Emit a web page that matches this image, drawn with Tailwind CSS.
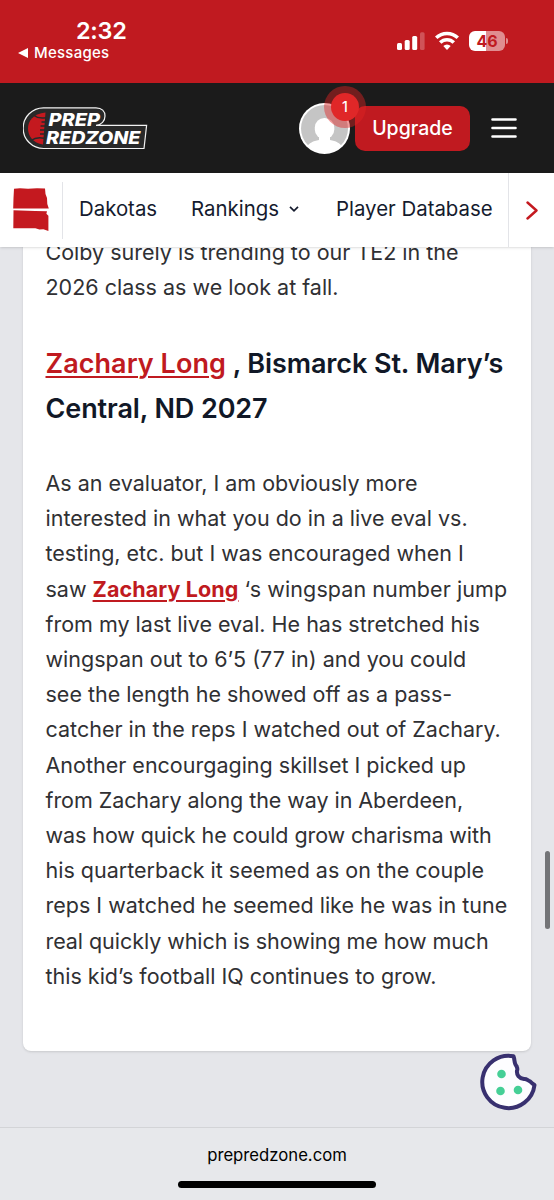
<!DOCTYPE html>
<html lang="en">
  <head>
    <meta charset="UTF-8" />
    <meta name="viewport" content="width=device-width, initial-scale=1.0" />
    <title>Prep Redzone</title>
    <script src="https://cdn.jsdelivr.net/npm/@tailwindcss/browser@4"></script>
  </head>
  <body class="w-[554px] h-[1200px] overflow-hidden flex flex-col bg-[#e5e6ea] font-['Inter','Liberation_Sans',sans-serif]">

    <!-- status bar -->
    <div class="h-[83px] shrink-0 bg-[#c01a20] text-white flex justify-between">
      <div class="pl-[18px] pt-[17px]">
        <p class="pl-[58px] text-[23.5px] leading-[28px] font-semibold tracking-[-0.3px]">2:32</p>
        <p class="flex items-center gap-[6px] pt-px text-[15px] leading-[14px] font-medium tracking-[0.25px]">
          <svg class="w-[10px] h-[10px]" viewBox="0 0 10 10"><path d="M0 5 10 0v10z" fill="currentColor" /></svg>
          Messages
        </p>
      </div>
      <div class="flex items-start pt-[31px] pr-[49px]">
        <svg class="w-[28px] h-5" viewBox="0 0 28 20" fill="#fff">
          <rect x="0" y="12" width="5" height="7" rx="1.5" />
          <rect x="7.7" y="9" width="5" height="10" rx="1.5" />
          <rect x="15.2" y="5" width="5" height="14" rx="1.5" />
          <rect x="23" y="1.3" width="4.6" height="17.7" rx="1.5" opacity=".25" />
        </svg>
        <svg class="w-6 h-5 ml-[10px] mr-[10px]" viewBox="0 0 24 20" fill="none" stroke="#fff" stroke-width="3.5">
          <path d="M1.2 6.8a15.4 15.4 0 0 1 21.6 0" />
          <path d="M5.2 11.6a9.6 9.6 0 0 1 13.6 0" />
          <path d="M8.3 15.1a5.2 5.2 0 0 1 7.4 0L12 18.9z" fill="#fff" stroke="none" />
        </svg>
        <div class="relative w-9 h-5 rounded-[6px] bg-linear-to-r from-white from-47% to-[#e08d90] to-47% text-[#c01a20] text-[16px] leading-5 font-bold text-center">46
          <div class="absolute -right-[3px] top-[7px] w-[2px] h-[6px] rounded-r-full bg-[#e08d90]"></div>
        </div>
      </div>
    </div>

    <!-- header -->
    <header class="h-[90px] shrink-0 bg-[#1b1b1b] flex items-center justify-between pl-[22.5px] pr-[37px]">
      <svg class="w-[125px] h-[43px]" viewBox="0 0 125 43">
        <path d="M20.5.8H73c6 0 9 3.6 9 8.2C82 14 78.5 17.800 73 18.3h50.6L121 41.5H20.5A20.3 20.3 0 0 1 20.5.8z" fill="#292929" stroke="#f2f2f2" stroke-width="1.2" />
        <path d="M22.5 5.5C10 7 5 14 5 21.500S10 36 20 37.500z" fill="#c4191f" />
        <path d="M11 8.500c3 2.500 7 3 12 2.200M8 33.500c4-3 8-3.500 13-2.300" fill="none" stroke="#292929" stroke-width="1.5" />
        <path d="M18.500 15h5M17.500 19h5M17 23h5M17 27h5" stroke="#292929" stroke-width="1.3" />
        <g fill="#fff" font-family="Inter, 'Liberation Sans', sans-serif" font-weight="800" font-style="italic" font-size="17.8">
          <text x="25.500" y="19" textLength="51.500" lengthAdjust="spacingAndGlyphs">PREP</text>
          <text x="23" y="37" textLength="94.500" lengthAdjust="spacingAndGlyphs">REDZONE</text>
        </g>
      </svg>
      <div class="flex items-center">
        <div class="relative z-10 w-[51px] h-[51px]">
          <svg class="w-[51px] h-[51px]" viewBox="0 0 51 51">
            <defs><clipPath id="face"><circle cx="25.5" cy="25.5" r="24" /></clipPath></defs>
            <circle cx="25.5" cy="25.5" r="25.5" fill="#fff" />
            <circle cx="25.5" cy="25.5" r="23.5" fill="#c5c5c5" />
            <g clip-path="url(#face)" fill="#fff">
              <rect x="15.8" y="15" width="19.5" height="21" rx="9.5" />
              <path d="M20 32h11v5c6 1 10 3 12 7v8H8v-8c2-4 6-6 12-7z" />
            </g>
          </svg>
          <div class="absolute left-[25px] -top-[17px] w-[42px] h-[42px] rounded-full bg-[#e02424]/45 flex items-center justify-center">
            <span class="w-7 h-7 rounded-full bg-[#e02728] text-white text-sm leading-7 text-center font-medium">1</span>
          </div>
        </div>
        <button class="ml-[5px] w-[115px] h-[45px] pt-[2px] rounded-[10px] bg-[#c01a20] text-white text-[19.5px] font-medium">Upgrade</button>
        <svg class="ml-[21px] w-[26px] h-5" viewBox="0 0 26 20" stroke="#fff" stroke-width="2.6" stroke-linecap="round"><path d="M1.500 1.500h23M1.500 10h23M1.500 18.500h23" /></svg>
      </div>
    </header>

    <!-- region nav -->
    <nav class="relative z-10 h-[74px] shrink-0 bg-white shadow-sm flex items-center text-[20.4px] text-[#151b2e]">
      <div class="w-[63px] h-[57px] pl-[13px] border-r border-[#e3e4e8] flex items-center">
        <svg class="w-9 h-[43px] mb-[2px]" viewBox="0 0 36 43" fill="#c4191f">
          <path d="M1 .8 7 .3 15 .8 24 .3 32 .5 32.500 6 34 10 34.300 16 35.800 20.500H.2L.5 10z" />
          <path d="M.5 22.300 22 23l12 .3-.6 2.500 2 2V43l-5-1.800-4 .3-4-1.300H.3z" />
        </svg>
      </div>
      <a class="w-[113px] pl-4 pb-[2px] whitespace-nowrap">Dakotas</a>
      <a class="w-[144px] pl-[15px] pb-[2px] whitespace-nowrap flex items-center gap-[10px]">Rankings
        <svg class="w-[10px] h-[6px]" viewBox="0 0 10 6" fill="none" stroke="currentColor" stroke-width="1.7"><path d="m1 .8 4 4 4-4" /></svg>
      </a>
      <a class="w-[188px] pl-4 pb-[2px] whitespace-nowrap">Player Database</a>
      <div class="flex-1 h-full border-l border-[#e3e4e8] flex items-center justify-center">
        <svg class="w-3 h-[19px]" viewBox="0 0 12 19" fill="none" stroke="#c4191f" stroke-width="2.4" stroke-linecap="round" stroke-linejoin="round"><path d="m1.500 1.500 9 8-9 8" /></svg>
      </div>
    </nav>

    <!-- article -->
    <main class="h-[880px] shrink-0 overflow-hidden px-[23px]">
      <article class="-mt-[13px] h-[817px] pt-[0.6px] rounded-lg bg-white shadow px-[22.5px] text-[21.5px] leading-[35.2px] text-[#303033] whitespace-nowrap">
        <p>Colby surely is trending to our TE2 in the<br />2026 class as we look at fall.</p>
        <h3 class="mt-[36px] text-[27px] leading-[45px] font-semibold tracking-[-0.1px] text-[#111827]"><a class="tracking-[0.05px] text-[#c01a20] underline decoration-2 underline-offset-[3px]">Zachary Long</a> , Bismarck St. Mary’s<br />Central, ND 2027</h3>
        <p class="mt-[35px]">As an evaluator, I am obviously more<br />
          interested in what you do in a live eval vs.<br />
          testing, etc. but I was encouraged when I<br />
          saw <a class="font-bold tracking-[0.1px] text-[#c01a20] underline decoration-2 underline-offset-[3px]">Zachary Long</a> <span class="tracking-[0.08px]">‘s wingspan number jump</span><br />
          from my last live eval. He has stretched his<br />
          wingspan out to 6’5 (77 in) and you could<br />
          see the length he showed off as a pass-<br />
          catcher in the reps I watched out of Zachary.<br />
          Another encourgaging skillset I picked up<br />
          <span class="tracking-[-0.06px]">from Zachary along the way in Aberdeen,</span><br />
          <span class="tracking-[-0.08px]">was how quick he could grow charisma with</span><br />
          his quarterback it seemed as on the couple<br />
          reps I watched he seemed like he was in tune<br />
          <span class="tracking-[-0.06px]">real quickly which is showing me how much</span><br />
          this kid’s football IQ continues to grow.</p>
      </article>
    </main>

    <!-- scrollbar -->
    <div class="absolute z-20 left-[545px] top-[851px] w-[5px] h-[78px] rounded-full bg-[#737477]"></div>

    <!-- cookie settings -->
    <button class="absolute z-20 left-[480px] top-[1053px]">
      <svg class="w-[58px] h-[58px]" viewBox="0 0 58 58">
        <path d="M33.500 3.200A26.200 26.200 0 1 0 54.500 32C52 30.500 51.500 30 50 28.300c-2.500-1-3.500-2.800-6-2.300-5-.5-7.500-4-7-8.500 1-1.500 0-3-.5-4.500C34 11 35 7 33.500 3.200z" fill="#fdfdff" stroke="#38306f" stroke-width="4" stroke-linejoin="round" />
        <g fill="#45cf96"><circle cx="21.5" cy="21" r="4.3" /><circle cx="20.5" cy="38" r="4.3" /><circle cx="38" cy="37" r="4.3" /></g>
      </svg>
    </button>

    <!-- address bar -->
    <footer class="flex-1 border-t border-[#d3d4d7] bg-[#e7e8eb] flex flex-col items-center text-black">
      <p class="mt-[15px] text-[16.7px] leading-6">prepredzone.com</p>
      <div class="mt-[14px] w-[198px] h-[7px] rounded-full bg-black"></div>
    </footer>
  </body>
</html>
